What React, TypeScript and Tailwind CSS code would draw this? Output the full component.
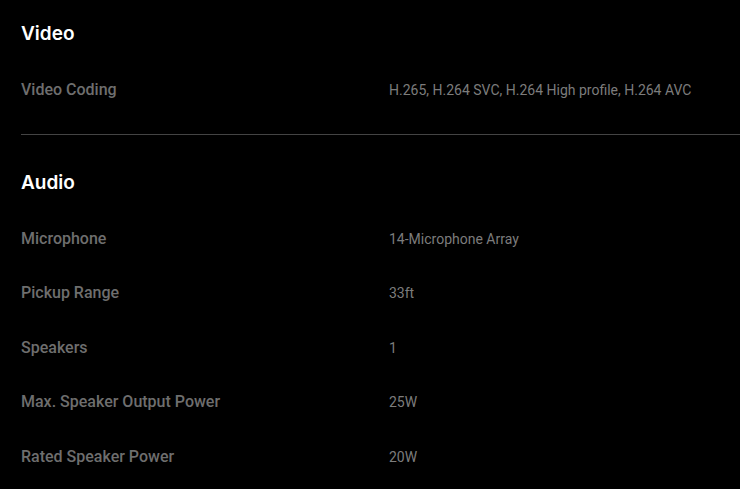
import React from 'react';

const sections = [
  {
    title: 'Video',
    rows: [['Video Coding', 'H.265, H.264 SVC, H.264 High profile, H.264 AVC']],
  },
  {
    title: 'Audio',
    rows: [
      ['Microphone', '14-Microphone Array'],
      ['Pickup Range', '33ft'],
      ['Speakers', '1'],
      ['Max. Speaker Output Power', '25W'],
      ['Rated Speaker Power', '20W'],
    ],
  },
];

export default function App() {
  return (
    <div className="h-[489px] w-[740px] overflow-hidden bg-black pl-[21px] font-['Roboto',sans-serif]">
      {sections.map((s, i) => (
        <div key={s.title} className={i > 0 ? 'border-t border-[#444] pt-[36px]' : 'pt-[22px]'}>
          <h2 className="font-['Inter',sans-serif] text-[19px] leading-[24px] font-semibold text-white">
            {s.title}
          </h2>
          <div className="pt-[32px] pb-[1px]">
            {s.rows.map(([label, value]) => (
              <div key={label} className="flex h-[54.6px] items-start pt-[1px]">
                <div className="w-[368px] text-[16px] leading-[22px] font-medium text-[#6e6e6e]">{label}</div>
                <div className="text-[14px] leading-[22px] text-[#7c7c7c]">{value}</div>
              </div>
            ))}
          </div>
        </div>
      ))}
    </div>
  );
}
